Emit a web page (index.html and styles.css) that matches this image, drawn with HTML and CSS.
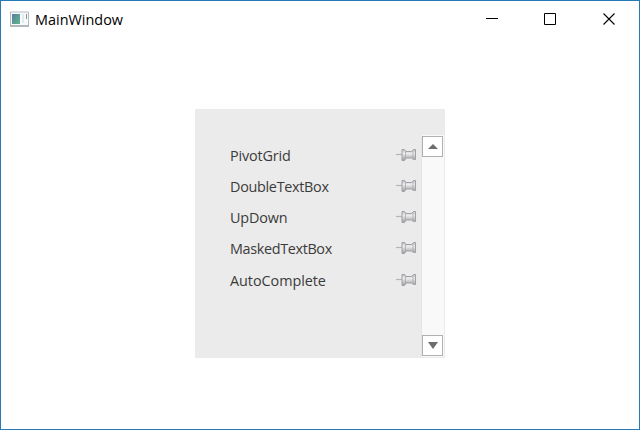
FILE: index.html
```html
<!DOCTYPE html>
<html lang="en">
<head>
<meta charset="utf-8">
<title>MainWindow</title>
<link rel="stylesheet" href="styles.css">
</head>
<body>
<svg class="defs" width="0" height="0" aria-hidden="true">
  <linearGradient id="metal" x1="0" y1="0" x2="0" y2="1"><stop offset="0" stop-color="#bcbdbf"/><stop offset=".35" stop-color="#ededee"/><stop offset="1" stop-color="#9c9da0"/></linearGradient>
  <linearGradient id="app" x1="0" y1="0" x2="1" y2="1"><stop offset="0" stop-color="#557f9f"/><stop offset="1" stop-color="#65b58c"/></linearGradient>
  <symbol id="pin" viewBox="0 0 21 14">
    <path d="M0 6.5H6" stroke="#b4b5b7" stroke-width="1.2"/>
    <path d="M6 1.5H8.5L10 3.5H15.5L17.5 1.5H19.5V11.5H17.5L15.5 10H10L8.5 12.5H6Z" fill="url(#metal)" stroke="#a0a1a4"/>
    <path d="M9.5 3.5V10M17 3V10.5" stroke="#a0a1a4" stroke-width=".7"/>
  </symbol>
</svg>
<div class="window">
  <header class="titlebar">
    <svg class="app-icon" width="19" height="16" viewBox="0 0 19 16"><path d="M.5 1H18.5V15H.5Z" fill="#f7f9fa" stroke="#b7bbbe"/><path d="M0 15H19" stroke="#8f9496"/><path d="M2 3H10V13H2Z" fill="url(#app)"/><path d="M12 3H14V12H12Z" fill="#e3eaec"/><path d="M16.5 3V8" stroke="#7e969b"/></svg>
    <span class="title">MainWindow</span>
    <div class="controls">
      <svg width="58" height="36"><path d="M15 17.5H27" stroke="#000"/></svg>
      <svg width="58" height="36"><path d="M15.5 12.5H26.5V23.5H15.5Z" fill="none" stroke="#000"/></svg>
      <svg width="52" height="36"><path d="M16.5 12.5L27.5 23.5M27.5 12.5L16.5 23.5" stroke="#000" stroke-width="1.1"/></svg>
    </div>
  </header>
  <main class="content">
    <section class="panel">
      <ul class="list">
        <li><span class="pivot">PivotGrid</span><svg width="21" height="14"><use href="#pin"/></svg></li>
        <li><span class="double">DoubleTextBox</span><svg width="21" height="14"><use href="#pin"/></svg></li>
        <li><span class="updown">UpDown</span><svg width="21" height="14"><use href="#pin"/></svg></li>
        <li><span class="masked">MaskedTextBox</span><svg width="21" height="14"><use href="#pin"/></svg></li>
        <li><span class="auto">AutoComplete</span><svg width="21" height="14"><use href="#pin"/></svg></li>
      </ul>
      <div class="scrollbar">
        <div class="arrow"><svg width="10" height="5"><path d="M0 5L5 0L10 5Z" fill="#6d6d6d"/></svg></div>
        <div class="arrow"><svg width="10" height="7"><path d="M0 0H10L5 7Z" fill="#6d6d6d"/></svg></div>
      </div>
    </section>
  </main>
</div>
</body>
</html>
```
FILE: styles.css
```css
* { box-sizing: border-box; }
body { margin: 0; font-family: "Open Sans", "Noto Sans", sans-serif; font-size: 14.4px; }
svg { display: block; flex: none; }
.defs { position: absolute; }
.window { width: 640px; height: 430px; border: 1px solid #287ab5; background: #fff; overflow: hidden; }
.titlebar { height: 36px; display: flex; align-items: center; padding-left: 9px; }
.app-icon { margin-right: 6px; }
.title { color: #000; line-height: 20px; letter-spacing: .03px; padding-top: 1px; }
.controls { display: flex; margin-left: auto; }
.content { padding: 72px 0 0 194px; }
.panel { width: 250px; height: 249px; background: #ebebeb; display: flex; padding: 26px 1px 1px 35px; }
.list { width: 187px; margin: 5px 0 0; padding: 0; list-style: none; color: #3b3b3b; }
.list li { height: 31.25px; display: flex; align-items: center; justify-content: space-between; }
.list span { line-height: 20px; letter-spacing: -.15px; }
.list .double { letter-spacing: -.3px; }
.list .masked { letter-spacing: -.35px; }
.list .auto { letter-spacing: -.05px; }
.list svg { margin-top: -2px; }
.scrollbar { width: 23px; height: 222px; margin-left: 4px; padding: 1px 1px 1px 0; background: #f9f9f9; border-left: 1px solid #e5e5e5; display: flex; flex-direction: column; justify-content: space-between; }
.arrow { width: 21px; height: 21px; border: 1px solid #b0b0b0; background: #fff; display: flex; align-items: center; justify-content: center; }
```
